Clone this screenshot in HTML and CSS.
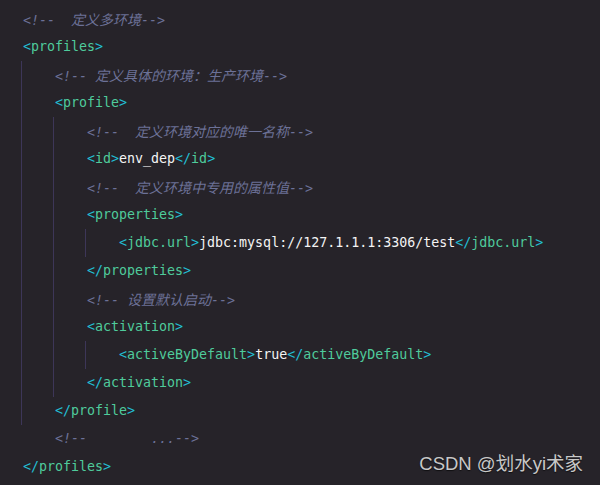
FILE: index.html
```html
<!DOCTYPE html>
<html lang="zh">
<head>
<meta charset="utf-8">
<title>profiles</title>
<link rel="stylesheet" href="styles.css">
</head>
<body>
<div class="code">
  <div class="line"><span class="c">&lt;!--  <span class="cjk">定义多环境</span>--&gt;</span></div>
  <div class="line"><span class="b">&lt;</span><span class="t">profiles</span><span class="b">&gt;</span></div>
  <div class="block">
    <div class="line"><span class="c">&lt;!-- <span class="cjk">定义具体的环境：生产环境</span>--&gt;</span></div>
    <div class="line"><span class="b">&lt;</span><span class="t">profile</span><span class="b">&gt;</span></div>
    <div class="block">
      <div class="line"><span class="c">&lt;!--  <span class="cjk">定义环境对应的唯一名称</span>--&gt;</span></div>
      <div class="line"><span class="b">&lt;</span><span class="t">id</span><span class="b">&gt;</span><span class="v">env_dep</span><span class="b">&lt;/</span><span class="t">id</span><span class="b">&gt;</span></div>
      <div class="line"><span class="c">&lt;!--  <span class="cjk">定义环境中专用的属性值</span>--&gt;</span></div>
      <div class="line"><span class="b">&lt;</span><span class="t">properties</span><span class="b">&gt;</span></div>
      <div class="block">
        <div class="line"><span class="b">&lt;</span><span class="t">jdbc.url</span><span class="b">&gt;</span><span class="v">jdbc:mysql://127.1.1.1:3306/test</span><span class="b">&lt;/</span><span class="t">jdbc.url</span><span class="b">&gt;</span></div>
      </div>
      <div class="line"><span class="b">&lt;/</span><span class="t">properties</span><span class="b">&gt;</span></div>
      <div class="line"><span class="c">&lt;!-- <span class="cjk">设置默认启动</span>--&gt;</span></div>
      <div class="line"><span class="b">&lt;</span><span class="t">activation</span><span class="b">&gt;</span></div>
      <div class="block">
        <div class="line"><span class="b">&lt;</span><span class="t">activeByDefault</span><span class="b">&gt;</span><span class="v">true</span><span class="b">&lt;/</span><span class="t">activeByDefault</span><span class="b">&gt;</span></div>
      </div>
      <div class="line"><span class="b">&lt;/</span><span class="t">activation</span><span class="b">&gt;</span></div>
    </div>
    <div class="line"><span class="b">&lt;/</span><span class="t">profile</span><span class="b">&gt;</span></div>
  </div>
  <div class="block noguide">
    <div class="line"><span class="c">&lt;!--        ...--&gt;</span></div>
  </div>
  <div class="line"><span class="b">&lt;/</span><span class="t">profiles</span><span class="b">&gt;</span></div>
</div>
<div class="watermark">CSDN @划水yi术家</div>
</body>
</html>
```
FILE: styles.css
```css
html, body {
  margin: 0;
  padding: 0;
  background: #262329;
  width: 600px;
  height: 485px;
  overflow: hidden;
}
body {
  position: relative;
}
.code {
  padding: 5px 0 0 21px;
  font-family: "DejaVu Sans Mono", "Liberation Mono", "Noto Sans CJK SC", monospace;
  font-size: 13.3px;
  color: #e6e6e6;
}
.line {
  height: 28px;
  line-height: 28px;
  padding-left: 2px;
  white-space: pre;
}
.block {
  border-left: 1px solid #3d3658;
  padding-left: 31px;
}
.block.noguide {
  border-left-color: transparent;
}
.b { color: #22bfd4; }
.t { color: #4fcb9c; }
.v { color: #f4f4f4; }
.c {
  color: #6c7197;
  font-style: italic;
}
.cjk {
  font-family: "Noto Sans CJK SC", sans-serif;
  font-size: 14px;
}
.watermark {
  position: absolute;
  right: 17px;
  bottom: 10px;
  font-family: "Liberation Sans", "Noto Sans CJK SC", sans-serif;
  font-size: 18.5px;
  color: #c8c8c8;
  text-shadow: 0 1px 1px rgba(0, 0, 0, 0.6);
}
```
